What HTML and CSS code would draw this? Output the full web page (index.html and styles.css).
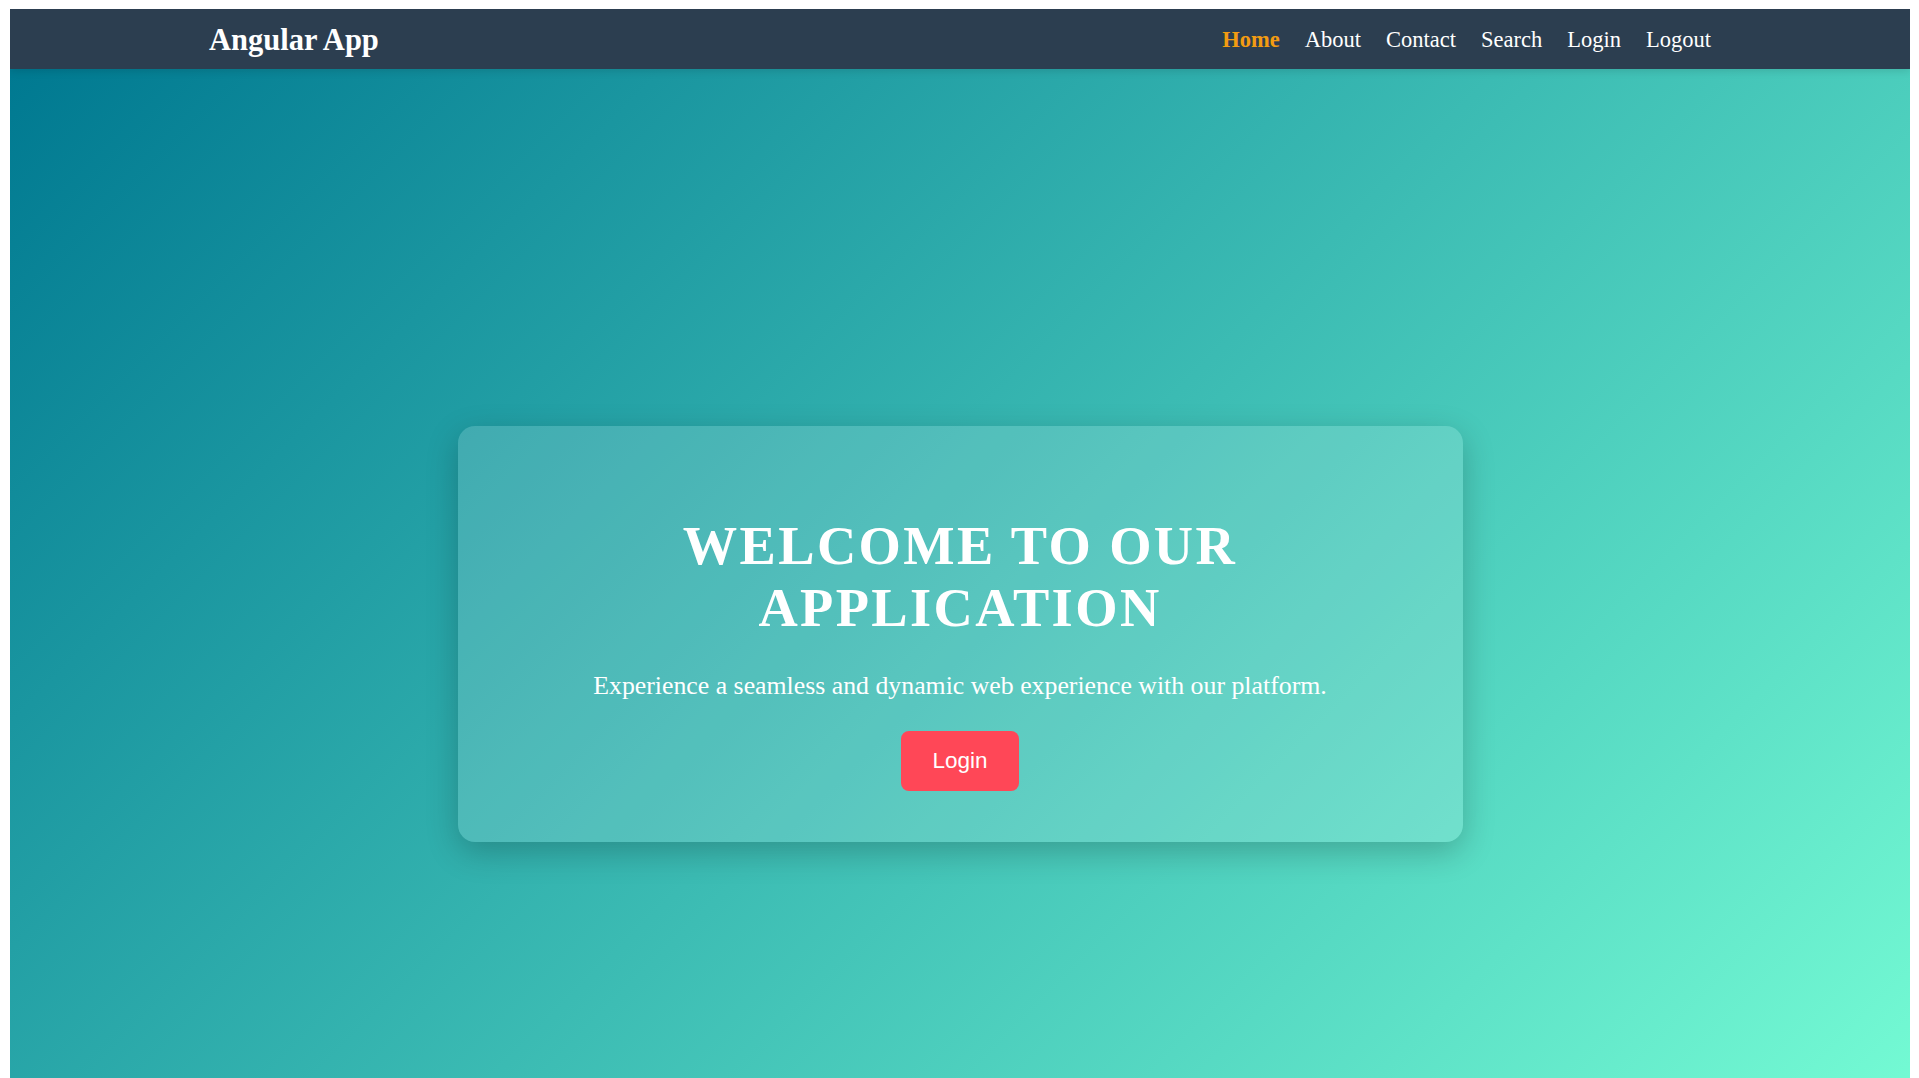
FILE: index.html
```html
<!DOCTYPE html>
<html lang="en">
<head>
<meta charset="utf-8">
<title>Angular App</title>
<link rel="stylesheet" href="styles.css">
</head>
<body>
  <nav class="navbar">
    <div class="nav-inner">
      <a class="brand" href="#">Angular App</a>
      <ul class="nav-links">
        <li><a class="nav-link active" href="#">Home</a></li>
        <li><a class="nav-link" href="#">About</a></li>
        <li><a class="nav-link" href="#">Contact</a></li>
        <li><a class="nav-link" href="#">Search</a></li>
        <li><a class="nav-link" href="#">Login</a></li>
        <li><a class="nav-link" href="#">Logout</a></li>
      </ul>
    </div>
  </nav>
  <main class="hero">
    <section class="card">
      <h1 class="card-title">Welcome to Our Application</h1>
      <p class="card-text">Experience a seamless and dynamic web experience with our platform.</p>
      <button class="btn-login" type="button">Login</button>
    </section>
  </main>
</body>
</html>
```

FILE: styles.css
```css
html {
  overflow: hidden;
}

body {
  margin: 9px 9px 0 10px;
  font-family: "Liberation Serif", "Times New Roman", serif;
  background: #ffffff;
}

.navbar {
  position: relative;
  z-index: 1;
  height: 60px;
  background: #2c3e50;
  box-shadow: 0 2px 8px rgba(0, 0, 0, 0.12);
  display: flex;
  align-items: center;
}

.nav-inner {
  width: 1502px;
  margin: 0 auto;
  display: flex;
  align-items: center;
  justify-content: space-between;
  padding-top: 2px;
}

.brand {
  color: #ffffff;
  text-decoration: none;
  font-weight: bold;
  font-size: 30.5px;
}

.nav-links {
  list-style: none;
  margin: 0;
  padding: 0;
  display: flex;
  gap: 25px;
}

.nav-link {
  color: #ffffff;
  text-decoration: none;
  font-size: 22.5px;
}

.nav-link.active {
  color: #f39c12;
  font-weight: bold;
}

.hero {
  height: 1130px;
  background: linear-gradient(135deg, #007991, #78ffd6);
  display: flex;
  align-items: center;
  justify-content: center;
}

.card {
  box-sizing: border-box;
  width: 1005px;
  padding: 51px 48px;
  border-radius: 17px;
  background: rgba(255, 255, 255, 0.15);
  box-shadow: 0 10px 32px rgba(0, 0, 0, 0.22);
  display: flex;
  flex-direction: column;
  align-items: center;
  text-align: center;
  color: #ffffff;
}

.card-title {
  margin: 38px 0 32px;
  font-size: 54.4px;
  font-weight: bold;
  letter-spacing: 2.4px;
  text-transform: uppercase;
  line-height: 62px;
}

.card-text {
  margin: 0 0 31px;
  font-size: 25.8px;
  line-height: 29.5px;
}

.btn-login {
  border: none;
  border-radius: 8px;
  background: #ff4757;
  color: #ffffff;
  font-family: "Liberation Sans", Arial, sans-serif;
  font-size: 22.5px;
  line-height: 26px;
  padding: 17px 31.5px;
  cursor: pointer;
}
```
